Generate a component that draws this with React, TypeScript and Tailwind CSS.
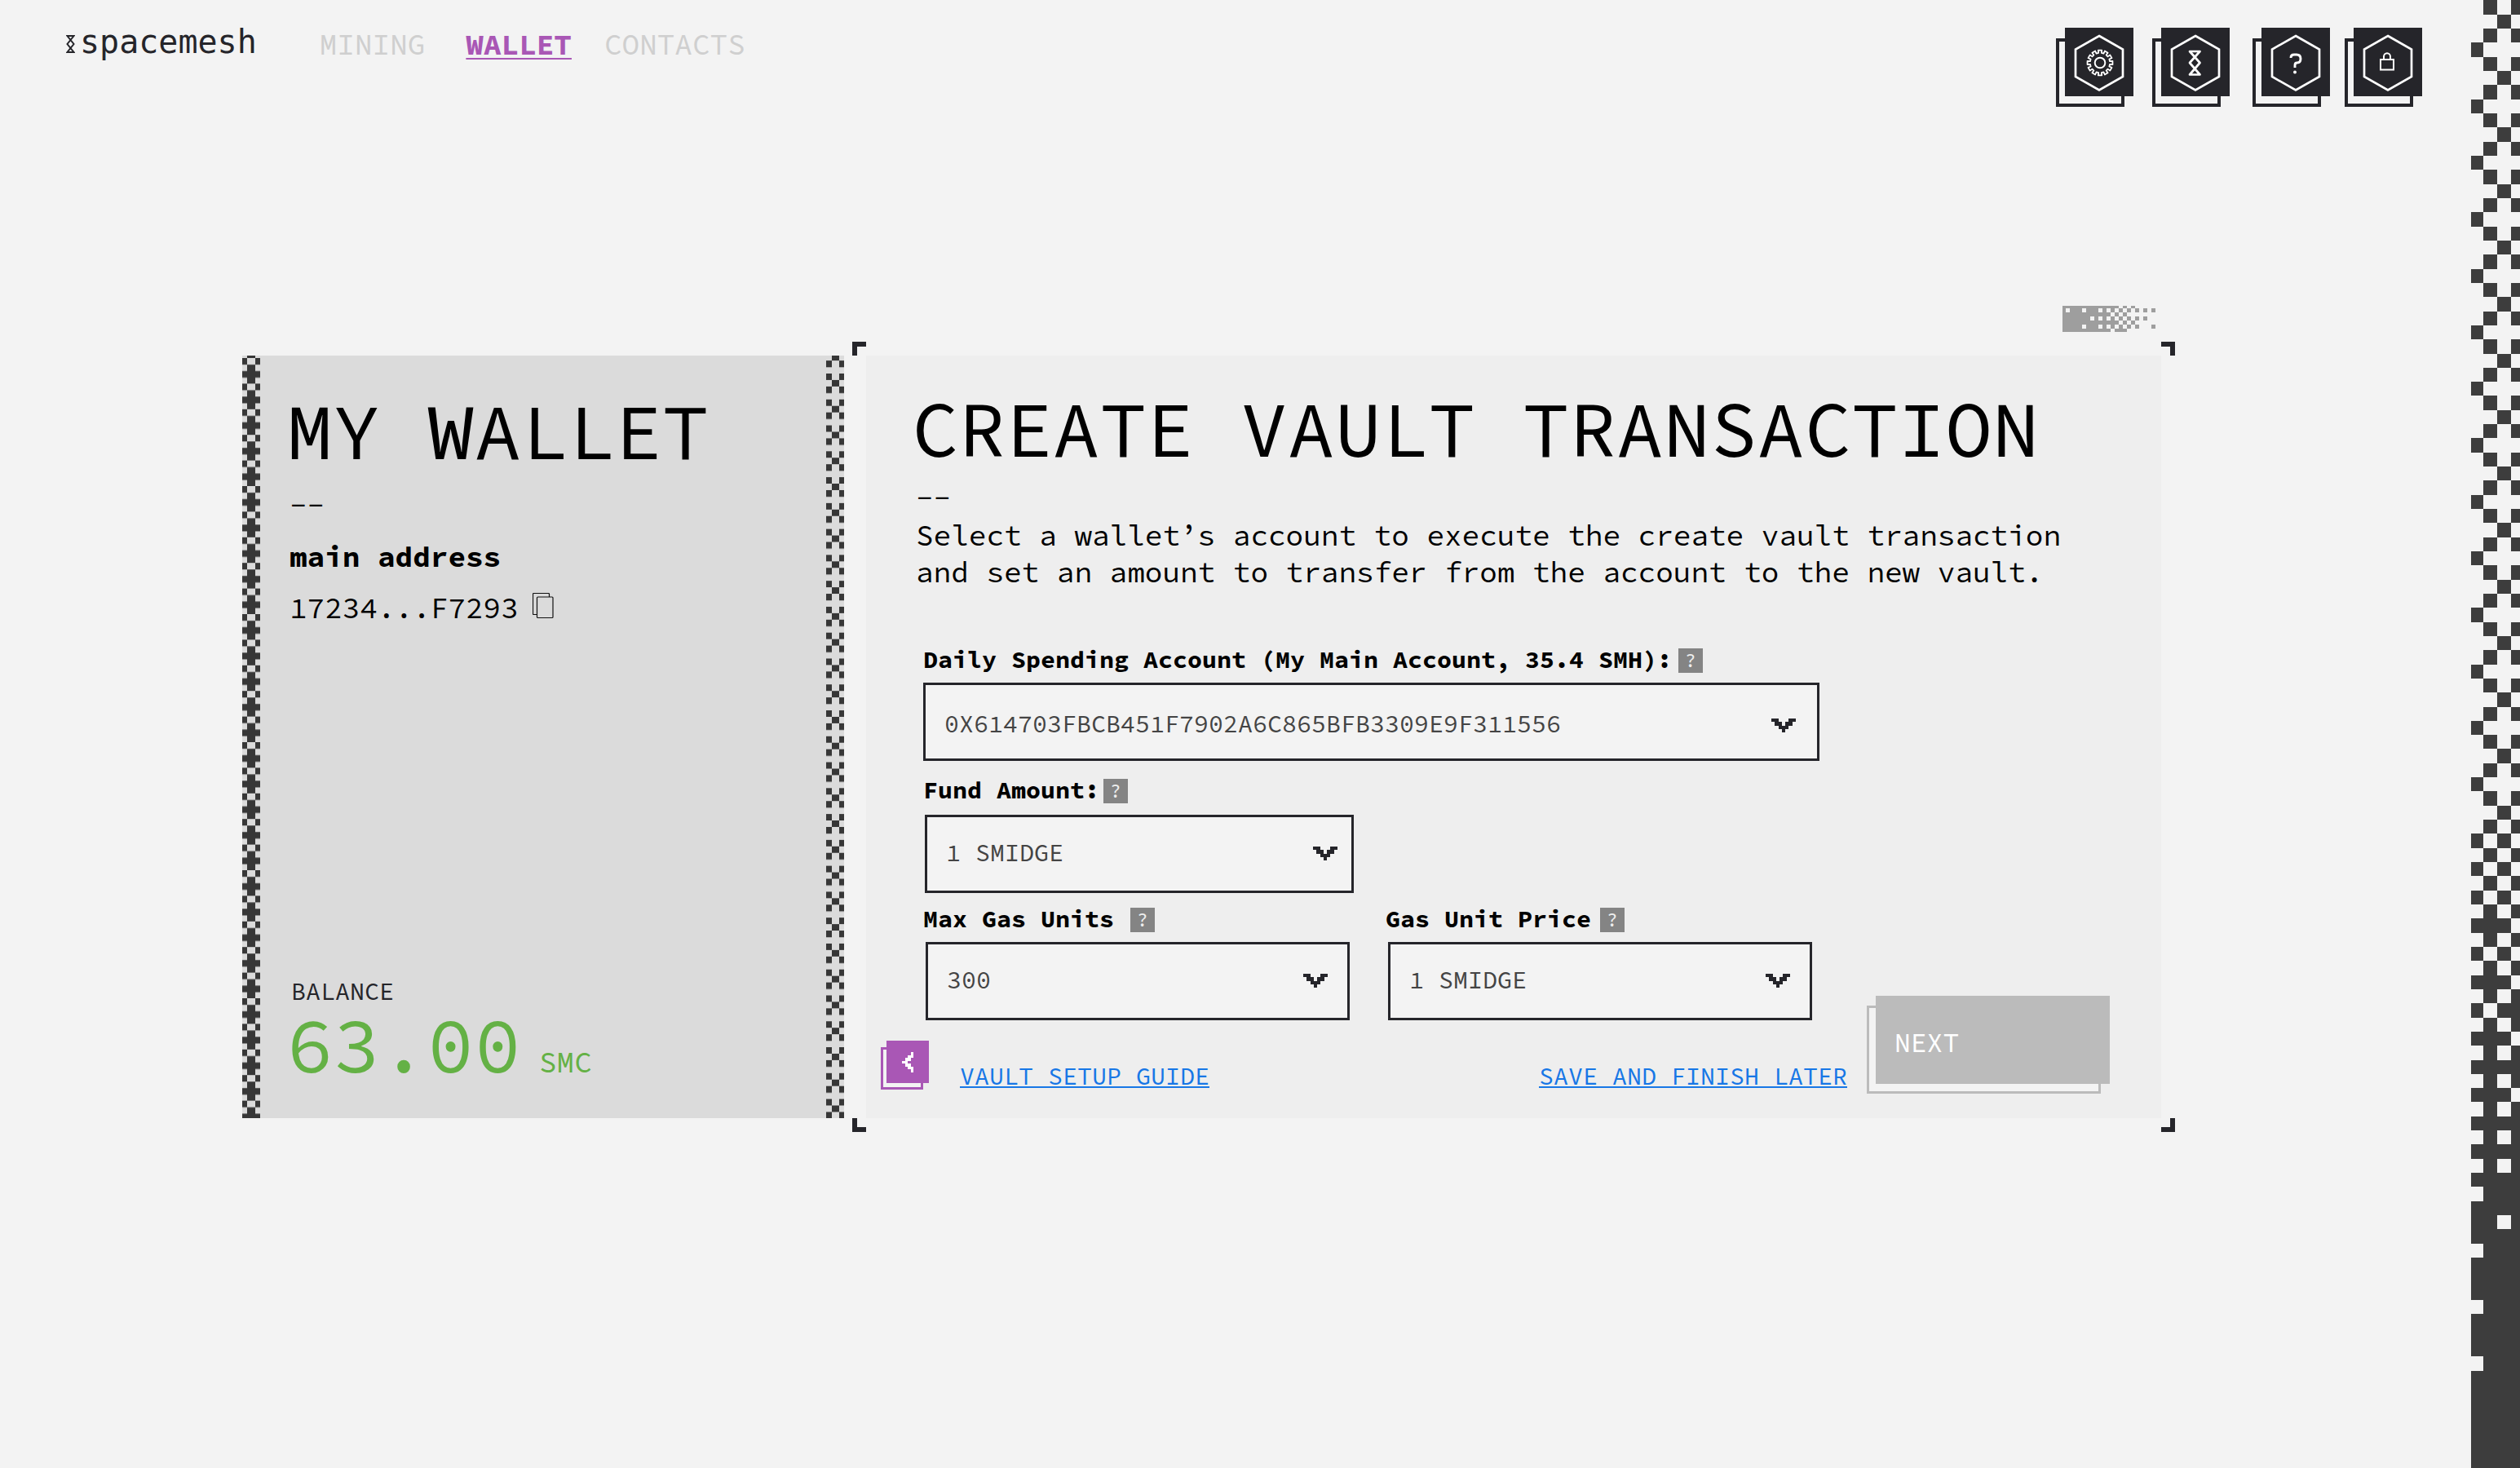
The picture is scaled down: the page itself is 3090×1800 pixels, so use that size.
import type { ReactNode } from "react";

const SIDE_ROWS: string[] = [
  ...Array.from({ length: 59 }, (_, i) => [".#.#", "..#.", ".#.#", "#..."][i % 4]),
  "#.#.", ".#.#", "#.#.", ".#.#", "#.#.", ".#.#", "###.", ".#.#", "#.#.", ".#.#",
  "###.", ".#.#", "#.##", ".#.#", "###.", ".#.#", "####", ".#.#", "###.", ".#.#",
  "####", ".#.#", "####", ".#.#", "####", ".###", "####", "##.#", "####", ".###",
  "####", "####", "####", ".###", "####", "####", "####", ".###", "####", "####",
  "####", "####", "####", "####", "####", "####",
];

const SIDE_COLS = [0, 15, 32, 49, 60];

const NOISE_ROWS = [
  "##############.#.#.....",
  "#.###.###.#.#.#.#.#.#.#",
  "############.#.#.......",
  "#######.#.#.#.#.#.#.#..",
  "##############.#.#.....",
  "#####.###.#.#.#.#.#...#",
  "############.###.......",
];

const NOISE_Y = [0, 3, 8, 13, 18, 23, 28, 32];

function noiseX(col: number) {
  return col === 0 ? 0 : 4 + (col - 1) * 5;
}

function SideDither() {
  const pitch = 17.32;
  const y = (r: number) => (r === 0 ? 0 : Math.round(r * pitch + 0.5));
  return (
    <svg viewBox="0 0 60 1800" preserveAspectRatio="none" className="w-full" fill="#3d3d3d" shapeRendering="crispEdges" aria-hidden="true">
      {SIDE_ROWS.flatMap((row, r) =>
        [...row].map((c, i) =>
          c === "#" ? (
            <rect key={`${r}-${i}`} x={SIDE_COLS[i]} y={y(r)} width={SIDE_COLS[i + 1] - SIDE_COLS[i]} height={y(r + 1) - y(r)} />
          ) : null,
        ),
      )}
    </svg>
  );
}

function NoiseMark() {
  return (
    <svg width="114" height="32" viewBox="0 0 114 32" fill="#9e9e9e" shapeRendering="crispEdges" aria-hidden="true">
      {NOISE_ROWS.flatMap((row, r) =>
        [...row].map((c, i) =>
          c === "#" ? (
            <rect key={`${r}-${i}`} x={noiseX(i)} y={NOISE_Y[r]} width={noiseX(i + 1) - noiseX(i)} height={NOISE_Y[r + 1] - NOISE_Y[r]} />
          ) : null,
        ),
      )}
    </svg>
  );
}

function LeftEdge() {
  return (
    <svg className="absolute inset-y-0 left-0 h-full w-[22px]" aria-hidden="true">
      <defs>
        <pattern id="edge-left" width="22" height="31.4" y="3" patternUnits="userSpaceOnUse">
          <path d="M0 0h6v8H0zM16 0h6v8h-6zM6 8h10v23.4H6zM0 16h22v8H0z" fill="#373737" />
        </pattern>
      </defs>
      <rect width="100%" height="100%" fill="url(#edge-left)" />
    </svg>
  );
}

function RightEdge() {
  return (
    <svg className="absolute inset-y-0 right-0 h-full w-[22px]" aria-hidden="true">
      <defs>
        <pattern id="edge-right" width="22" height="31.77" y="22" patternUnits="userSpaceOnUse">
          <path d="M0 0h7v8H0zM16 0h6v8h-6zM7 8h9v8H7zM0 16h7v8H0zM16 16h6v8h-6z" fill="#373737" />
        </pattern>
      </defs>
      <rect width="100%" height="100%" fill="url(#edge-right)" />
    </svg>
  );
}

function ToolButton({ label, className, children }: { label: string; className?: string; children: ReactNode }) {
  return (
    <button type="button" aria-label={label} className={`relative h-[97px] w-[95px] ${className ?? ""}`}>
      <span className="absolute bottom-0 left-0 h-[84px] w-[84px] border-4 border-[#25252a]" />
      <span className="absolute right-0 top-0 h-[84px] w-[84px] bg-[#25252a]">
        <svg width="84" height="84" viewBox="0 0 84 84" fill="none" stroke="#fff">
          <path d="M42 10 71 26.500V60L42 76.500 13 60V26.500Z" strokeWidth="2.700" />
          {children}
        </svg>
      </span>
    </button>
  );
}

const GEAR_PATH = (() => {
  const teeth = 12;
  const pts: string[] = [];
  for (let i = 0; i < teeth; i++) {
    const a = (i / teeth) * Math.PI * 2 - Math.PI / 2;
    const corners: [number, number][] = [
      [-0.15, 12.2],
      [-0.14, 15.6],
      [0.14, 15.6],
      [0.15, 12.2],
    ];
    for (const [d, r] of corners) {
      pts.push(`${(43 + Math.cos(a + d) * r).toFixed(2)} ${(43 + Math.sin(a + d) * r).toFixed(2)}`);
    }
  }
  return `M${pts.join("L")}Z`;
})();

function Arrow() {
  return (
    <svg width="30" height="17" viewBox="0 0 7 4" preserveAspectRatio="none" fill="#25252a" shapeRendering="crispEdges" aria-hidden="true">
      <path d="M0 0h2v1h1v1h1V1h1V0h2v1H6v1H5v1H4v1H3V3H2V2H1V1H0z" />
    </svg>
  );
}

function Badge({ className }: { className: string }) {
  return (
    <button
      type="button"
      aria-label="Help"
      className={`h-[30px] w-[30px] shrink-0 bg-[#848484] text-center text-[24px] leading-[30px] text-[#eee] ${className}`}
    >
      ?
    </button>
  );
}

type FieldProps = {
  id: string;
  label: string;
  value: string;
  badge: string;
  box: string;
  select: string;
  arrow: string;
};

function Field({ id, label, value, badge, box, select, arrow }: FieldProps) {
  return (
    <div>
      <div className="flex h-10 items-center">
        <label htmlFor={id} className="whitespace-nowrap pb-1 text-[30px] font-bold leading-9">
          {label}
        </label>
        <Badge className={badge} />
      </div>
      <div className={`relative h-24 ${box}`}>
        <select
          id={id}
          className={`h-full w-full appearance-none rounded-none border-[3px] border-[#25252a] bg-[#f3f3f3] pl-[23px] text-[30px] text-[#444] ${select}`}
        >
          <option>{value}</option>
        </select>
        <span className={`pointer-events-none absolute ${arrow}`}>
          <Arrow />
        </span>
      </div>
    </div>
  );
}

export default function App() {
  return (
    <div className="flex min-h-screen bg-[#f3f3f3] font-['Source_Code_Pro','Liberation_Mono',monospace] text-black">
      <div className="min-w-0 flex-1">
        <header className="flex items-start pl-[81px] pr-[60px] pt-[34px]">
          <a href="#home" className="flex items-start text-[#25252a]">
            <svg width="11" height="22" viewBox="0 0 11 22" className="mt-[9px]" fill="none" stroke="#25252a" strokeWidth="2" aria-hidden="true">
              <path d="M1.500 1h8L1.500 11l8 10h-8l8-10z" />
            </svg>
            <span className="ml-1.5 font-['DejaVu_Sans_Mono',monospace] text-[40px] leading-[34px]">spacemesh</span>
          </a>
          <nav className="ml-[77px] mt-px flex text-[36px] leading-10 text-[#cfcfcf]">
            <a href="#mining">MINING</a>
            <a href="#wallet" aria-current="page" className="ml-[50px] font-bold text-[#a957b5] underline decoration-2 underline-offset-4">
              WALLET
            </a>
            <a href="#contacts" className="ml-10">CONTACTS</a>
          </nav>
          <div className="ml-auto flex">
            <ToolButton label="Settings">
              <path d={GEAR_PATH} strokeWidth="1.800" strokeLinejoin="round" />
              <circle cx="43" cy="43" r="6.300" strokeWidth="2" />
            </ToolButton>
            <ToolButton label="Network" className="ml-[23px]">
              <path d="M35 29h12.500L35 43l12.500 14.500H35L47.500 43z" strokeWidth="2.700" strokeLinejoin="round" />
            </ToolButton>
            <ToolButton label="Help" className="ml-7">
              <path d="M36 37c0-2.500 1.500-4 4-4h3c3.500 0 5 2 5 5s-1.500 5-4.500 5c-2 0-2.500 1-2.500 3v3" strokeWidth="2.900" />
              <circle cx="41" cy="54.500" r="2" fill="#fff" stroke="none" />
            </ToolButton>
            <ToolButton label="Lock" className="ml-[18px]">
              <path d="M33 39h16v12.500H33zM37 39v-3.500a4 4.300 0 0 1 8 0V39" strokeWidth="2" />
            </ToolButton>
          </div>
        </header>

        <main className="mt-[244px] pl-[297px] pr-[363px]">
          <div className="flex justify-end pr-6">
            <NoiseMark />
          </div>

          <div className="mt-3 flex">
            <section className="relative my-[17px] flex w-[738px] shrink-0 flex-col bg-[#dbdbdb] pb-11 pl-[54px] pt-[43px]">
              <LeftEdge />
              <RightEdge />
              <h1 className="text-[96px] leading-[100px]">MY WALLET</h1>
              <p className="mt-[18px] pl-1 text-[36px] leading-[45px]">--</p>
              <h2 className="mt-[18px] pl-1 text-[36px] font-bold leading-[45px]">main address</h2>
              <div className="mt-[18px] flex items-start pl-1">
                <span className="text-[36px] leading-[45px]">17234...F7293</span>
                <button type="button" aria-label="Copy address" className="ml-[17px] mt-1">
                  <svg width="26" height="32" viewBox="0 0 26 32" fill="none" stroke="#111" strokeWidth="1.200">
                    <path d="M20.500 5V1.500a1 1 0 0 0-1-1h-18a1 1 0 0 0-1 1v24a1 1 0 0 0 1 1H5" />
                    <rect x="5.500" y="5" width="19.500" height="25.500" rx="1" />
                  </svg>
                </button>
              </div>
              <p className="mt-auto pl-1.5 text-[30px] leading-10 text-[#25252a]">BALANCE</p>
              <p className="flex items-baseline text-[96px] leading-[92px] text-[#64b145]">
                63.00<span className="ml-[22px] text-[36px] leading-10">SMC</span>
              </p>
            </section>

            <section className="relative ml-2.5 min-w-0 flex-1 p-[17px]">
              <span className="absolute left-0 top-0 size-[17px] border-l-[6px] border-t-[6px] border-[#25252a]" />
              <span className="absolute right-0 top-0 size-[17px] border-r-[6px] border-t-[6px] border-[#25252a]" />
              <span className="absolute bottom-0 left-0 size-[17px] border-b-[6px] border-l-[6px] border-[#25252a]" />
              <span className="absolute bottom-0 right-0 size-[17px] border-b-[6px] border-r-[6px] border-[#25252a]" />

              <div className="bg-[#eee] pb-[30px] pl-[18px] pr-[63px] pt-10">
                <h1 className="pl-[38px] text-[96px] leading-[100px]">CREATE VAULT TRANSACTION</h1>
                <div className="pl-[43px] text-[36px] leading-[45px]">
                  <p className="mt-3.5 leading-[42px]">--</p>
                  <p className="mt-0.5">
                    Select a wallet’s account to execute the create vault transaction
                    <br />
                    and set an amount to transfer from the account to the new vault.
                  </p>
                </div>

                <div className="mt-[66px] flex flex-col pl-[52px]">
                  <Field
                    id="account"
                    label="Daily Spending Account (My Main Account, 35.4 SMH):"
                    value="0X614703FBCB451F7902A6C865BFB3309E9F311556"
                    badge="ml-2"
                    box="mt-[7px] w-[1099px]"
                    select="pt-1"
                    arrow="right-[29px] top-11"
                  />
                  <div className="mt-[17px]">
                    <Field
                      id="fund"
                      label="Fund Amount:"
                      value="1 SMIDGE"
                      badge="ml-[5px]"
                      box="ml-[2px] mt-[9px] w-[526px]"
                      select="pb-1"
                      arrow="right-5 top-[39px]"
                    />
                  </div>
                </div>

                <div className="mt-[13px] flex items-end">
                  <div className="flex-1">
                    <div className="flex gap-11 pl-[52px]">
                      <Field
                        id="gas-units"
                        label="Max Gas Units"
                        value="300"
                        badge="ml-5"
                        box="ml-[3px] mt-[7px] w-[520px]"
                        select="pb-1"
                        arrow="right-[27px] top-[39px]"
                      />
                      <Field
                        id="gas-price"
                        label="Gas Unit Price"
                        value="1 SMIDGE"
                        badge="ml-[11px]"
                        box="ml-[3px] mt-[7px] w-[520px]"
                        select="pb-1"
                        arrow="right-[27px] top-[39px]"
                      />
                    </div>
                    <div className="mt-[25px] flex items-start pb-0.5 text-[30px] leading-10 text-[#1777e6]">
                      <button type="button" aria-label="Back" className="relative h-[60px] w-[59px]">
                        <span className="absolute bottom-0 left-0 size-[52px] border-[3px] border-[#a957b5] bg-[#f3f3f3]" />
                        <span className="absolute right-0 top-0 flex size-[52px] items-center justify-center bg-[#a957b5]">
                          <svg width="14" height="25" viewBox="0 0 4 7" preserveAspectRatio="none" fill="#fff" shapeRendering="crispEdges">
                            <path d="M3 0h1v2H3v1H2v1h1v1h1v2H3V6H2V5H1V4H0V3h1V2h1V1h1z" />
                          </svg>
                        </span>
                      </button>
                      <a href="#guide" className="ml-[38px] mt-[23px] underline decoration-2 underline-offset-2">
                        VAULT SETUP GUIDE
                      </a>
                      <a href="#save" className="ml-auto mt-[23px] underline decoration-2 underline-offset-2">
                        SAVE AND FINISH LATER
                      </a>
                    </div>
                  </div>
                  <button type="button" className="relative ml-6 h-[120px] w-[298px] text-left text-[33px] text-white">
                    <span className="absolute bottom-0 left-0 h-[108px] w-[287px] border-[3px] border-[#bbb] bg-[#f3f3f3]" />
                    <span className="absolute right-0 top-0 flex h-[108px] w-[287px] items-center bg-[#bbb] pl-[23px] pt-2">NEXT</span>
                  </button>
                </div>
              </div>
            </section>
          </div>
        </main>
      </div>

      <aside className="w-[60px] shrink-0">
        <SideDither />
      </aside>
    </div>
  );
}
